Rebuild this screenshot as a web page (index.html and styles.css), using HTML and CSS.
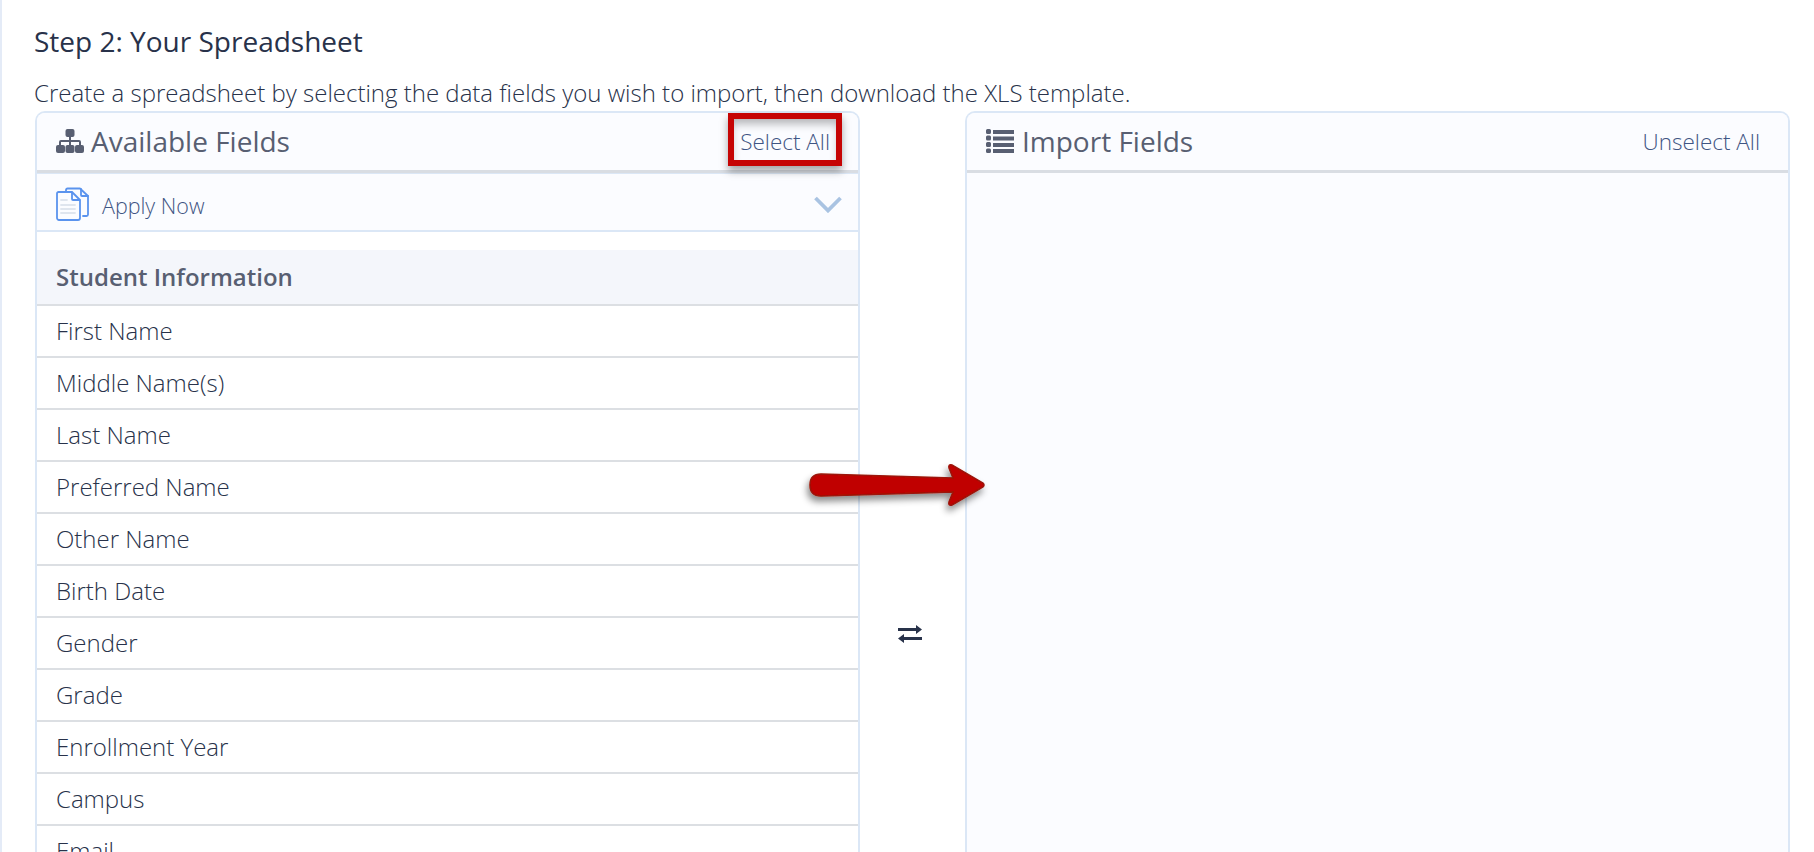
FILE: index.html
```html
<!DOCTYPE html>
<html lang="en">
<head>
<meta charset="utf-8">
<title>Step 2: Your Spreadsheet</title>
<link rel="stylesheet" href="styles.css">
</head>
<body>
<main class="page">
  <h2 class="step-title">Step 2: Your Spreadsheet</h2>
  <p class="step-desc">Create a spreadsheet by selecting the data fields you wish to import, then download the XLS template.</p>
  <div class="columns">
    <section class="panel">
      <header class="panel-head">
        <h3 class="panel-title">
          <svg class="ic-sitemap" viewBox="0 0 28 24"><rect x="9.500" y="0" width="9" height="8" rx="2"/><rect x="0" y="16" width="9" height="8" rx="2"/><rect x="9.500" y="16" width="9" height="8" rx="2"/><rect x="19" y="16" width="9" height="8" rx="2"/><path d="M13 7h2v4h8a2 2 0 0 1 2 2v4h-2v-4h-8v4h-2v-4H5v4H3v-4a2 2 0 0 1 2-2h8z"/></svg>
          Available Fields
        </h3>
        <a class="panel-action">Select All</a>
      </header>
      <div class="accordion">
        <svg class="ic-docs" viewBox="0 0 34 34" fill="none" stroke="#5a93ee" stroke-width="1.800" stroke-linejoin="round" stroke-linecap="round">
          <path d="M10 5V3a1.500 1.500 0 0 1 1.500-1.500H24L32 9v18.500a1.500 1.500 0 0 1-1.500 1.500H27"/>
          <path d="M25 2v6a1 1 0 0 0 1 1h6"/>
          <path d="M2.500 5H16l8 8v18a2 2 0 0 1-2 2H3a2 2 0 0 1-2-2V6.500A1.500 1.500 0 0 1 2.500 5z" fill="#fbfcff"/>
          <path d="M16 5.500V12a1 1 0 0 0 1 1h6.500"/>
          <path d="M5 13h6M5 18h14M5 22h14M5 26h14" stroke="#dfe5ee"/>
        </svg>
        <span class="accordion-label">Apply Now</span>
        <svg class="ic-chevron" viewBox="0 0 28 17" fill="none" stroke="#a9c3e2" stroke-width="3.800"><path d="M1.500 2 14 14.500 26.500 2"/></svg>
      </div>
      <div class="list">
        <div class="list-group">Student Information</div>
        <div class="list-item">First Name</div>
        <div class="list-item">Middle Name(s)</div>
        <div class="list-item">Last Name</div>
        <div class="list-item">Preferred Name</div>
        <div class="list-item">Other Name</div>
        <div class="list-item">Birth Date</div>
        <div class="list-item">Gender</div>
        <div class="list-item">Grade</div>
        <div class="list-item">Enrollment Year</div>
        <div class="list-item">Campus</div>
        <div class="list-item">Email</div>
      </div>
    </section>
    <div class="swap">
      <svg class="ic-swap" viewBox="0 0 24 18" fill="#28324a"><path d="M0 3h18V0l6 4.500L18 9V6H0zM24 12H6V9l-6 4.500L6 18v-3h18z"/></svg>
    </div>
    <section class="panel panel-import">
      <header class="panel-head">
        <h3 class="panel-title">
          <svg class="ic-list" viewBox="0 0 28 24"><path d="M0 1.500A1.500 1.500 0 0 1 1.500 0h2A1.500 1.500 0 0 1 5 1.500v2A1.500 1.500 0 0 1 3.500 5h-2A1.500 1.500 0 0 1 0 3.500zM0 8A1.500 1.500 0 0 1 1.500 6.500h2A1.500 1.500 0 0 1 5 8v2a1.500 1.500 0 0 1-1.500 1.500h-2A1.500 1.500 0 0 1 0 10zM0 14.500A1.500 1.500 0 0 1 1.500 13h2A1.500 1.500 0 0 1 5 14.500v2A1.500 1.500 0 0 1 3.500 18h-2A1.500 1.500 0 0 1 0 16.500zM0 21a1.500 1.500 0 0 1 1.500-1.500h2A1.500 1.500 0 0 1 5 21v1.500A1.500 1.500 0 0 1 3.500 24h-2A1.500 1.500 0 0 1 0 22.500zM7 1h21v4H7zM7 7.500h21v4H7zM7 14h21v4H7zM7 20h21v4H7z"/></svg>
          Import Fields
        </h3>
        <a class="panel-action">Unselect All</a>
      </header>
    </section>
  </div>
</main>
<div class="callout-box"></div>
<svg class="callout-arrow" viewBox="0 0 180 46">
  <defs><filter id="sh" x="-10%" y="-40%" width="120%" height="200%"><feDropShadow dx="-2" dy="5" stdDeviation="3.500" flood-color="#000" flood-opacity=".45"/></filter></defs>
  <path d="M12 11 L144 15 L140 5 Q139 1 143 2 L174 20 Q176 22 174 24 L143 42 Q139 43 140 39 L144 29 L12 33 Q1 33 1 22 Q1 11 12 11z" fill="#c00303" stroke="#9c1208" stroke-width="1.500" filter="url(#sh)"/>
</svg>
</body>
</html>
```
FILE: styles.css
```css
* { box-sizing: border-box; }
html, body { margin: 0; height: 100%; overflow: hidden; background: #fff; }
body {
  font-family: "Open Sans", sans-serif;
  color: #28324a;
  border-left: 2px solid #e4ebf7;
  position: relative;
}
.page { padding: 22px 25px 0 32px; }
.step-title { margin: 0; font-size: 28px; line-height: 38px; font-weight: 400; color: #28324a; }
.step-desc { margin: 17px 0 0; font-size: 24px; line-height: 32px; font-weight: 300; color: #28324a; height: 34px; }
.columns { display: flex; align-items: flex-start; margin-left: 1px; height: 900px; }
.panel {
  width: 825px; height: 900px; flex: none;
  border: 2px solid #dbe7f6; border-bottom: 0;
  border-radius: 10px 10px 0 0;
  background: #fff;
}
.panel-import { background: #fbfcff; }
.panel-head {
  height: 60px; display: flex; align-items: center; justify-content: space-between;
  padding: 0 28px 2px 19px;
  background: #fbfcff; border-bottom: 3px solid #d9dde3;
  border-radius: 8px 8px 0 0;
}
.panel-title { margin: 0; display: flex; align-items: center; font-size: 28px; line-height: 38px; font-weight: 400; color: #585f72; }
.ic-sitemap { width: 28px; height: 24px; margin-right: 7px; fill: #585f72; }
.ic-list { width: 28px; height: 24px; margin-right: 8px; fill: #585f72; }
.panel-action { padding-top: 2px; font-size: 22.500px; line-height: 30px; font-weight: 300; color: #3f5583; }
.accordion {
  height: 59px; display: flex; align-items: center;
  padding: 4px 16px 0 19px;
  background: #fbfcff; border-top: 1px solid #dbe7f6; border-bottom: 2px solid #dbe7f6;
}
.ic-docs { width: 34px; height: 34px; margin-right: 12px; }
.accordion-label { flex: 1; padding-top: 3px; font-size: 21.500px; line-height: 28px; font-weight: 300; color: #3f5583; }
.ic-chevron { width: 28px; height: 17px; }
.list { padding-top: 18px; }
.list-group {
  height: 56px; display: flex; align-items: center; padding: 0 0 2px 19px;
  background: #f4f6fb; border-bottom: 2px solid #dcdfe3;
  font-size: 24px; font-weight: 600; color: #585f72;
}
.list-item {
  height: 52px; display: flex; align-items: center; padding: 0 0 2px 19px;
  background: #fff; border-bottom: 2px solid #dcdfe3;
  font-size: 24px; font-weight: 300; color: #28324a;
}
.swap { width: 105px; flex: none; height: 900px; display: flex; justify-content: center; padding-top: 514px; padding-right: 6px; }
.ic-swap { width: 24px; height: 18px; }
.callout-box {
  position: absolute; left: 726px; top: 113px; width: 114px; height: 53px;
  border: 6px solid #c60404;
  box-shadow: 0 5px 8px rgba(0,0,0,.35), inset 0 7px 8px -2px rgba(0,0,0,.28);
}
.callout-arrow { position: absolute; left: 807px; top: 463px; width: 180px; height: 46px; overflow: visible; }
```
